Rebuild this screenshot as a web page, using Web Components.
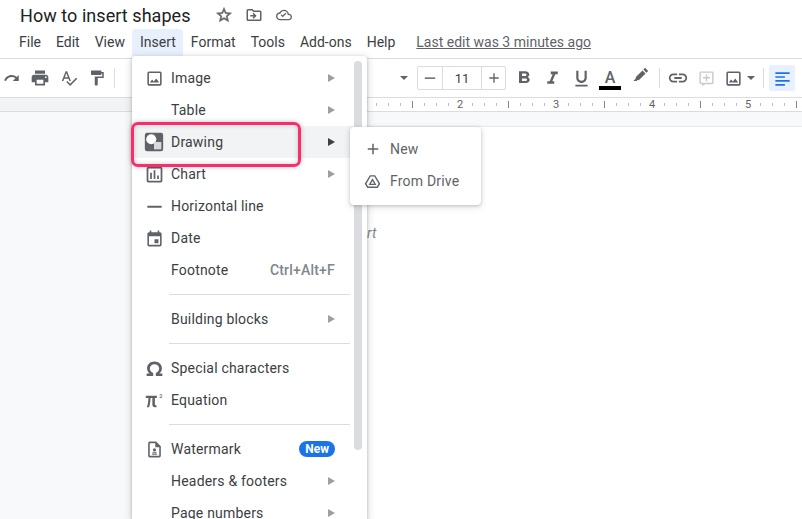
<!DOCTYPE html>
<html>
<head>
<meta charset="utf-8">
<style>
  html, body { margin: 0; height: 519px; overflow: hidden; background: #f8f9fa; }
  body { font-family: Roboto, "Liberation Sans", sans-serif; color: #3c4043; }
</style>
</head>
<body>
<docs-shell></docs-shell>
<script>
const icons = {
  image: '<path d="M19 5v14H5V5h14m0-2H5a2 2 0 0 0-2 2v14c0 1.100.9 2 2 2h14a2 2 0 0 0 2-2V5a2 2 0 0 0-2-2zm-4.860 8.860-3 3.870L9 13.140 6 17h12l-3.860-5.140z"/>',
  drawing: '<path d="M4.500 2h15A2.500 2.500 0 0 1 22 4.500v15a2.500 2.500 0 0 1-2.500 2.500h-15A2.500 2.500 0 0 1 2 19.500v-15A2.500 2.500 0 0 1 4.500 2z"/><circle cx="9" cy="9" r="5.500" fill="#fff"/><rect x="12" y="12" width="8" height="8" fill="#d9dadd"/>',
  chart: '<path d="M19 3H5a2 2 0 0 0-2 2v14a2 2 0 0 0 2 2h14a2 2 0 0 0 2-2V5a2 2 0 0 0-2-2zm0 16H5V5h14v14zM7 10h2v7H7zm4-3h2v10h-2zm4 6h2v4h-2z"/>',
  line: '<path d="M3 11h18v2.500H3z"/>',
  date: '<path d="M19 4h-1V2h-2v2H8V2H6v2H5a2 2 0 0 0-2 2v14a2 2 0 0 0 2 2h14a2 2 0 0 0 2-2V6a2 2 0 0 0-2-2zm0 16H5V9h14v11zm-7-7h5v5h-5z"/>',
  omega: '<path d="M12 4C7.300 4 3.500 7.300 3.500 11.800c0 2.500 1.100 4.600 3 6H3V20.500h7.500v-3.400c-2.200-.6-3.800-2.700-3.800-5.100 0-2.900 2.300-5 5.300-5s5.300 2.100 5.300 5c0 2.400-1.600 4.500-3.800 5.100v3.400H21v-2.700h-3.500c1.900-1.400 3-3.500 3-6C20.500 7.300 16.700 4 12 4z"/>',
  pi: '<path d="M1 6h14v2.800h-2.500V17c0 .6.300 1 1 1h1v2.500h-2c-1.900 0-3.200-1.100-3.200-3V8.800H7c-.1 4.500-.7 8.500-1.900 11.700H2.200C3.600 17.400 4.200 13.300 4.300 8.800H1z"/><text x="18" y="9" font-size="7" font-weight="500" font-family="Roboto">2</text>',
  watermark: '<path d="M14 2H6a2 2 0 0 0-2 2v16a2 2 0 0 0 2 2h12a2 2 0 0 0 2-2V8l-6-6zm4 18H6V4h7v5h5v11z"/><circle cx="12" cy="12.500" r="2"/><path d="M9.500 15.500h5l.5 1.500H9zM9 18h6v1H9z"/>',
  plus: '<path d="M19 13h-6v6h-2v-6H5v-2h6V5h2v6h6v2z"/>',
  drive: '<path d="M8.300 3h7.400L23 15.300 19.300 21H4.700L1 15.300 8.300 3zm1.100 2L3.400 15.200 5.800 19h12.400l2.400-3.800L14.600 5H9.400z"/><path d="M12 7.500 17.500 17h-11L12 7.500zm0 3.700-2.300 3.900h4.600L12 11.200z"/>',
  redo: '<path d="M18.400 10.600C16.600 9 14.200 8 11.500 8c-4.600 0-8.500 3-9.900 7.200l2.400.8c1-3.200 4-5.500 7.500-5.500 2 0 3.700.7 5.100 1.900L13 16h8V8l-2.600 2.600z"/>',
  print: '<path d="M19 8H5c-1.700 0-3 1.300-3 3v6h4v4h12v-4h4v-6c0-1.700-1.300-3-3-3zm-3 11H8v-5h8v5zm3-7a1 1 0 1 1 0-2 1 1 0 0 1 0 2zm-1-9H6v4h12V3z"/>',
  spell: '<path d="M12.500 16h2.100L9.500 3h-2L2.400 16h2.100l1.100-3h5.800l1.100 3zm-6.100-5L8.500 5.700 10.600 11H6.400zm15.200.6-8.100 8.100-3.700-3.700-1.400 1.400 5.100 5.100 9.500-9.500-1.400-1.400z"/>',
  paint: '<path d="M18 4V3a1 1 0 0 0-1-1H5a1 1 0 0 0-1 1v4a1 1 0 0 0 1 1h12a1 1 0 0 0 1-1V6h1v4H9v11a1 1 0 0 0 1 1h2a1 1 0 0 0 1-1v-9h8V4h-3z"/>',
  bold: '<path d="M15.600 10.800c1-.7 1.700-1.800 1.700-2.800 0-2.300-1.800-4-4-4H7v14h7c2.100 0 3.700-1.700 3.700-3.800 0-1.500-.9-2.800-2.100-3.400zM10 6.500h3c.8 0 1.500.7 1.500 1.500s-.7 1.500-1.500 1.500h-3v-3zm3.500 9H10v-3h3.500c.8 0 1.500.7 1.500 1.500s-.7 1.500-1.500 1.500z"/>',
  italic: '<path d="M10 4v3h2.200l-3.400 8H6v3h8v-3h-2.200l3.400-8H18V4z"/>',
  underline: '<path d="M12 17c3.300 0 6-2.700 6-6V3h-2.500v8c0 1.900-1.600 3.500-3.500 3.500S8.500 12.900 8.500 11V3H6v8c0 3.300 2.700 6 6 6zm-7 2v2h14v-2H5z"/>',
  pen: '<path d="M17.800 2.300 21.700 6.200 19.500 8.400 15.600 4.500zM14.500 5.600l3.900 3.900-7.900 7.900c-.6.600-1.500.7-2.200.4L7 19H3l3-3.200c-.2-.7 0-1.500.5-2.100l8-8.100z"/>',
  link: '<path d="M3.900 12c0-1.700 1.400-3.100 3.100-3.100h4V7H7c-2.800 0-5 2.200-5 5s2.200 5 5 5h4v-1.900H7c-1.700 0-3.100-1.400-3.100-3.100zM8 13h8v-2H8v2zm9-6h-4v1.900h4c1.700 0 3.100 1.400 3.100 3.100s-1.400 3.100-3.100 3.100h-4V17h4c2.800 0 5-2.200 5-5s-2.200-5-5-5z"/>',
  comment: '<path d="M20 2H4a2 2 0 0 0-2 2v14a2 2 0 0 0 2 2h2v3l4-3h10a2 2 0 0 0 2-2V4a2 2 0 0 0-2-2zm0 16H9.300L8 19v-1H4V4h16v14zM11 6h2v4h4v2h-4v4h-2v-4H7v-2h4z"/>',
  alignLeft: '<path d="M3 4h18v2.200H3zm0 5h12v2.200H3zm0 5h18v2.200H3zm0 5h12v2.200H3z"/>',
  star: '<path stroke="#5f6368" stroke-width=".7" d="M22 9.240l-7.190-.620L12 2 9.190 8.630 2 9.240l5.460 4.730L5.820 21 12 17.270 18.180 21l-1.630-7.030L22 9.240zM12 15.400l-3.760 2.270 1-4.280-3.320-2.880 4.380-.380L12 6.100l1.710 4.040 4.380.380-3.320 2.880 1 4.280L12 15.400z"/>',
  folder: '<path d="M20 6h-8l-2-2H4a2 2 0 0 0-2 2v12a2 2 0 0 0 2 2h16a2 2 0 0 0 2-2V8a2 2 0 0 0-2-2zm0 12H4V6h5.200l2 2H20v10zm-8.500-9-1.400 1.400 1.600 1.600H7v2h4.700l-1.600 1.600 1.400 1.400 4-4z"/>',
  cloud: '<path d="M19.400 10c-.7-3.400-3.700-6-7.400-6-2.900 0-5.400 1.600-6.600 4C2.300 8.400 0 11 0 14c0 3.300 2.700 6 6 6h13c2.800 0 5-2.200 5-5 0-2.600-2.100-4.800-4.600-5zM19 18H6c-2.200 0-4-1.800-4-4s1.800-4 4-4h.7C7.400 7.700 9.500 6 12 6c3 0 5.500 2.500 5.500 5.500v.5H19c1.700 0 3 1.300 3 3s-1.300 3-3 3zm-8.900-2.600-3-3 1.400-1.400 1.600 1.600 4-4 1.400 1.400-5.400 5.400z"/>'
};

function svg(name, size, color) {
  return `<svg viewBox="0 0 24 24" width="${size}" height="${size}" fill="${color || '#5f6368'}">${icons[name]}</svg>`;
}

// toolbar cell of a fixed width, icon centred
function cell(width, inner, extra) {
  return `<span class="cell" style="width:${width}px;${extra || ''}">${inner}</span>`;
}

class DocsTitlebar extends HTMLElement {
  connectedCallback() {
    const names = ['File', 'Edit', 'View', 'Insert', 'Format', 'Tools', 'Add-ons', 'Help'];
    this.attachShadow({ mode: 'open' }).innerHTML = `
<style>
  :host { display: block; height: 58px; background: #fff; border-bottom: 1px solid #dadce0; font-family: Roboto, sans-serif; }
  .top { display: flex; align-items: center; height: 29px; padding-left: 20px; }
  h1 { margin: 2px 0 0; font-size: 18px; font-weight: 400; letter-spacing: .05px; color: #202124; width: 195px; white-space: nowrap; line-height: 27px; }
  .act { display: flex; gap: 12px; align-items: center; margin-top: 1px; }
  .act svg { display: block; }
  .act svg:last-child { margin-left: 1px; }
  nav { display: flex; align-items: flex-start; padding-left: 11.500px; height: 29px; font-size: 14px; color: #3c4043; line-height: 27px; }
  nav span { padding: 0 7.500px; }
  nav span.on { background: #e8f0fe; border-radius: 4px 4px 0 0; height: 27px; }
  a { margin-left: 13.500px; color: #5f6368; text-decoration: underline; font-size: 14px; }
</style>
<div class="top">
  <h1>How to insert shapes</h1>
  <div class="act">${svg('star', 18)}${svg('folder', 18)}${svg('cloud', 16)}</div>
</div>
<nav>
  ${names.map(n => `<span class="${n === 'Insert' ? 'on' : ''}">${n}</span>`).join('')}
  <a>Last edit was 3 minutes ago</a>
</nav>`;
  }
}

class DocsToolbar extends HTMLElement {
  connectedCallback() {
    this.attachShadow({ mode: 'open' }).innerHTML = `
<style>
  :host { display: flex; align-items: center; height: 38px; background: #fff; border-bottom: 1px solid #dadce0; font-family: Roboto, sans-serif; }
  svg { display: block; flex: none; }
  .cell { display: flex; align-items: center; justify-content: center; flex: none; }
  .left { display: flex; align-items: center; width: 400px; flex: none; }
  .sep { width: 1px; height: 20px; background: #dadce0; flex: none; }
  .caret { width: 0; height: 0; border-left: 4px solid transparent; border-right: 4px solid transparent; border-top: 4px solid #5f6368; flex: none; }
  .size { display: flex; height: 22px; border: 1px solid #dadce0; border-radius: 2px; margin-left: 9px; margin-right: 4px; font-size: 13px; color: #3c4043; flex: none; }
  .size div { display: flex; align-items: center; justify-content: center; }
  .size .mid { width: 38px; border-left: 1px solid #dadce0; border-right: 1px solid #dadce0; }
  .size .b { width: 23px; }
  .size .b:first-child { width: 24px; }
  .color { display: flex; flex-direction: column; align-items: center; margin-top: 4px; }
  .color i { font: 500 16px/15px Roboto, sans-serif; font-style: normal; color: #5f6368; margin-bottom: 1px; }
  .color b { display: block; width: 22px; height: 4px; background: #000; }
  .align { width: 26px; height: 26px; background: #e8f0fe; border-radius: 2px; display: flex; align-items: center; justify-content: center; flex: none; }
</style>
<div class="left">
  ${cell(24, svg('redo', 18))}${cell(32, svg('print', 20))}${cell(25, svg('spell', 18))}${cell(31, svg('paint', 18))}
  <span class="sep" style="margin-left:2px"></span>
</div>
<span class="caret"></span>
<div class="size">
  <div class="b">${svg('line', 14)}</div><div class="mid">11</div><div class="b">${svg('plus', 16)}</div>
</div>
${cell(28, `<span style="display:block;transform:scaleX(1.2)">${svg('bold', 20)}</span>`)}
${cell(29, svg('italic', 21))}
${cell(28, svg('underline', 21))}
${cell(30, '<span class="color"><i>A</i><b></b></span>')}
${cell(31, svg('pen', 19), 'margin-bottom:5px;')}
${cell(6, '<span class="sep"></span>')}
${cell(32, svg('link', 22))}
${cell(24, svg('comment', 17, '#c8cacd'))}
${cell(30, svg('image', 19))}
<span class="caret" style="margin-left:-1px"></span>
<span class="sep" style="margin:0 5px 0 8px"></span>
<div class="align">${svg('alignLeft', 19, '#1a73e8')}</div>`;
  }
}

class DocsRuler extends HTMLElement {
  connectedCallback() {
    // quarter ticks every 12px, inch marks every 96px
    const ticks = [];
    for (let x = 376; x < 802; x += 12) {
      const inch = (x - 412) % 96 === 0;
      ticks.push(`<rect x="${x}" y="${inch ? 3 : 5}" width="1" height="${inch ? 7 : 3}" fill="${inch ? '#80868b' : '#bdc1c6'}"/>`);
    }
    const labels = [[460, 2], [556, 3], [652, 4], [748, 5]];
    this.attachShadow({ mode: 'open' }).innerHTML = `
<style>
  :host { display: block; height: 13px; background: #fff; border-bottom: 1px solid #dadce0; font-family: Roboto, sans-serif; overflow: hidden; }
  svg { display: block; }
  text { font-size: 11px; fill: #5f6368; text-anchor: middle; }
  rect.back { fill: #fff; }
</style>
<svg width="802" height="13">
  <rect x="0" y="0" width="368" height="13" fill="#f1f3f4"/>
  ${ticks.join('')}
  ${labels.map(l => `<rect class="back" x="${l[0] - 5}" y="0" width="10" height="13"/><text x="${l[0]}" y="10">${l[1]}</text>`).join('')}
</svg>`;
  }
}

class MenuRow extends HTMLElement {
  connectedCallback() {
    const icon = this.getAttribute('icon');
    const tail = this.getAttribute('tail');
    const root = this.attachShadow({ mode: 'open' });
    root.innerHTML = `
<style>
  :host { display: flex; align-items: center; height: 32px; flex: none; margin-right: 13px; font-size: 14px; letter-spacing: .2px; color: #3c4043; }
  :host([active]) { background: #f1f3f4; }
  .ic { width: 39px; display: flex; justify-content: center; padding-left: 5px; box-sizing: border-box; }
  .label { flex: 1; white-space: nowrap; }
  .arrow { width: 0; height: 0; border-left: 7px solid #9aa0a6; border-top: 4px solid transparent; border-bottom: 4px solid transparent; margin-right: 19px; }
  :host([active]) .arrow { border-left-color: #3c4043; }
  .key { color: #80868b; font-weight: 500; margin-right: 19px; letter-spacing: .2px; }
  .new { background: #1a73e8; color: #fff; font-size: 12px; font-weight: 700; border-radius: 8px; height: 16px; line-height: 16px; padding: 0 6px; margin-right: 19px; letter-spacing: 0; }
  svg { display: block; }
</style>
<div class="ic">${icon ? svg(icon, +(this.getAttribute('size') || 19)) : ''}</div>
<div class="label"><slot></slot></div>
${tail === 'arrow' ? '<span class="arrow"></span>' : ''}
${tail === 'new' ? '<span class="new">New</span>' : ''}
${tail && tail !== 'arrow' && tail !== 'new' ? `<span class="key">${tail}</span>` : ''}`;
  }
}

class MenuRule extends HTMLElement {
  connectedCallback() {
    this.attachShadow({ mode: 'open' }).innerHTML = `
<style>
  :host { display: block; height: 1px; background: #dadce0; margin: 8px 17px 8px 37px; flex: none; }
</style>`;
  }
}

class InsertMenu extends HTMLElement {
  connectedCallback() {
    this.attachShadow({ mode: 'open' }).innerHTML = `
<style>
  :host { display: flex; flex-direction: column; position: absolute; left: 132px; top: 56px; width: 235px; height: 463px; box-sizing: border-box; background: #fff; padding-top: 6px; border-radius: 4px 4px 0 0; box-shadow: 0 1px 3px rgba(60,64,67,.3), 0 2px 6px 2px rgba(60,64,67,.15); overflow: hidden; font-family: Roboto, sans-serif; }
  .bar { position: absolute; right: 5px; top: 5px; width: 8px; height: 389px; background: #dadce0; border-radius: 4px; }
</style>
<slot></slot>
<div class="bar"></div>`;
  }
}

class DrawingMenu extends HTMLElement {
  connectedCallback() {
    this.attachShadow({ mode: 'open' }).innerHTML = `
<style>
  :host { display: block; position: absolute; left: 350px; top: 127px; width: 131px; height: 78px; background: #fff; border-radius: 4px; padding: 6px 0; box-sizing: border-box; box-shadow: 0 1px 3px rgba(60,64,67,.25), 0 2px 6px 1px rgba(60,64,67,.12); font-family: Roboto, sans-serif; font-size: 14px; color: #5f6368; }
  div { display: flex; align-items: center; height: 32px; letter-spacing: .2px; }
  span { width: 40px; display: flex; justify-content: center; padding-left: 5px; box-sizing: border-box; }
  svg { display: block; }
</style>
<div><span>${svg('plus', 18)}</span>New</div>
<div><span>${svg('drive', 17)}</span>From Drive</div>`;
  }
}

class PinkHighlight extends HTMLElement {
  connectedCallback() {
    this.attachShadow({ mode: 'open' }).innerHTML = `
<style>
  :host { display: block; position: absolute; left: 131px; top: 122px; width: 170px; height: 45px; box-sizing: border-box; border: 3px solid #f92d6c; border-radius: 7px; box-shadow: 0 0 5px rgba(0,0,0,.25), inset 0 0 5px rgba(0,0,0,.2); }
</style>`;
  }
}

class DocsPage extends HTMLElement {
  connectedCallback() {
    this.attachShadow({ mode: 'open' }).innerHTML = `
<style>
  :host { display: block; position: absolute; left: 0; right: 0; top: 112px; height: 407px; overflow: hidden; }
  .paper { position: absolute; left: 316px; top: 15px; right: 0; bottom: 0; background: #fff; box-shadow: 0 0 2px rgba(60,64,67,.25); }
  em { position: absolute; left: 367px; top: 113px; font: italic 14px Roboto, sans-serif; color: #80868b; }
</style>
<div class="paper"></div><em>rt</em>`;
  }
}

class DocsShell extends HTMLElement {
  connectedCallback() {
    this.attachShadow({ mode: 'open' }).innerHTML = `
<style>
  :host { display: block; }
</style>
<docs-titlebar></docs-titlebar>
<docs-toolbar></docs-toolbar>
<docs-ruler></docs-ruler>
<docs-page></docs-page>
<insert-menu>
  <menu-row icon="image" tail="arrow">Image</menu-row>
  <menu-row tail="arrow">Table</menu-row>
  <menu-row icon="drawing" size="22" tail="arrow" active>Drawing</menu-row>
  <menu-row icon="chart" size="21" tail="arrow">Chart</menu-row>
  <menu-row icon="line">Horizontal line</menu-row>
  <menu-row icon="date">Date</menu-row>
  <menu-row tail="Ctrl+Alt+F">Footnote</menu-row>
  <menu-rule></menu-rule>
  <menu-row tail="arrow">Building blocks</menu-row>
  <menu-rule></menu-rule>
  <menu-row icon="omega" size="21">Special characters</menu-row>
  <menu-row icon="pi">Equation</menu-row>
  <menu-rule></menu-rule>
  <menu-row icon="watermark" tail="new">Watermark</menu-row>
  <menu-row tail="arrow">Headers &amp; footers</menu-row>
  <menu-row tail="arrow">Page numbers</menu-row>
</insert-menu>
<drawing-menu></drawing-menu>
<pink-highlight></pink-highlight>`;
  }
}

customElements.define('docs-titlebar', DocsTitlebar);
customElements.define('docs-toolbar', DocsToolbar);
customElements.define('docs-ruler', DocsRuler);
customElements.define('docs-page', DocsPage);
customElements.define('menu-row', MenuRow);
customElements.define('menu-rule', MenuRule);
customElements.define('insert-menu', InsertMenu);
customElements.define('drawing-menu', DrawingMenu);
customElements.define('pink-highlight', PinkHighlight);
customElements.define('docs-shell', DocsShell);
</script>
</body>
</html>
